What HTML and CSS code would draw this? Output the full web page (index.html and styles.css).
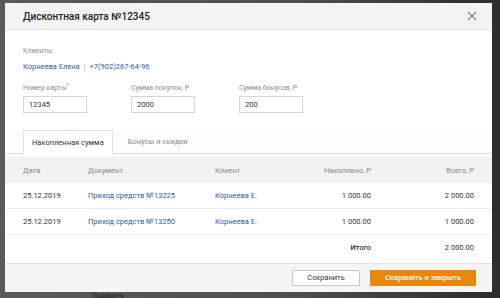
FILE: index.html
```html
<!DOCTYPE html>
<html lang="ru">
<head>
<meta charset="utf-8">
<link rel="stylesheet" href="styles.css">
</head>
<body>
<div class="backdrop">
  <div class="modal">
    <div class="head">
      <div class="title">Дисконтная карта №12345</div>
      <svg class="close" width="10" height="10" viewBox="0 0 10 10"><path d="M1 1L9 9M9 1L1 9" stroke="#8a8a8a" stroke-width="1.3"/></svg>
    </div>
    <div class="body">
      <div class="label">Клиенты</div>
      <div class="client"><span class="link">Корнеева Елена</span><span class="sep">|</span><span class="link">+7(902)267-64-96</span></div>
      <div class="fields">
        <div class="field"><div class="label">Номер карты<sup>*</sup></div><div class="input">12345</div></div>
        <div class="field"><div class="label">Сумма покупок, Р</div><div class="input">2000</div></div>
        <div class="field"><div class="label">Сумма бонусов, Р</div><div class="input">200</div></div>
      </div>
    </div>
    <div class="tabs">
      <div class="tab active">Накопленная сумма</div>
      <div class="tab">Бонусы и скидки</div>
    </div>
    <div class="table">
      <div class="row th">
        <div class="c1">Дата</div><div class="c2">Документ</div><div class="c3">Клиент</div><div class="c4">Накоплено, Р</div><div class="c5">Всего, Р</div>
      </div>
      <div class="row">
        <div class="c1">25.12.2019</div><div class="c2 link">Приход средств №13225</div><div class="c3 link">Корнеева Е.</div><div class="c4">1 000.00</div><div class="c5">2 000.00</div>
      </div>
      <div class="row">
        <div class="c1">25.12.2019</div><div class="c2 link">Приход средств №13250</div><div class="c3 link">Корнеева Е.</div><div class="c4">1 000.00</div><div class="c5">1 000.00</div>
      </div>
      <div class="row total">
        <div class="c1"></div><div class="c2"></div><div class="c3"></div><div class="c4 b">Итого</div><div class="c5">2 000.00</div>
      </div>
    </div>
    <div class="foot">
      <div class="btn">Сохранить</div>
      <div class="btn primary">Сохранить и закрыть</div>
    </div>
  </div>
  <div class="under">Подарить</div>
</div>
</body>
</html>
```
FILE: styles.css
```css
html, body { margin: 0; padding: 0; }
body {
  width: 500px; height: 298px; overflow: hidden;
  font-family: Roboto, "Liberation Sans", sans-serif;
  color: #333;
  background: linear-gradient(90deg, #5a5a5a 0%, #4d4d4d 60%, #2b2e2a 100%);
}
.backdrop { position: relative; height: 298px; padding: 3px 0 0 5px; box-sizing: border-box; }
.modal {
  width: 487px; height: 289px; background: #fff;
  display: flex; flex-direction: column;
  position: relative; z-index: 1;
}
.head {
  height: 26px; background: #f4f4f4; border-bottom: 1px solid #e6e6e6;
  display: flex; align-items: center; justify-content: space-between;
  padding: 0 15px 0 18px;
}
.title { font-size: 10px; font-weight: 500; color: #222; }
.body { padding: 17px 18px 0; }
.label { font-size: 7px; color: #8c8c8c; line-height: 9px; }
.label sup { color: #e07000; font-size: 6px; line-height: 0; }
.client { margin-top: 5px; font-size: 7.5px; line-height: 11px; }
.link { color: #2a5aa6; }
.sep { color: #999; margin: 0 4px; }
.fields { display: flex; gap: 44px; margin-top: 12px; }
.field { width: 64px; }
.input {
  margin-top: 3px; border: 1px solid #d4d4d4; box-sizing: border-box;
  height: 17px; font-size: 7.5px; line-height: 15px; padding-left: 5px; color: #333;
}
.tabs {
  margin-top: 17px; height: 23px; padding: 0 18px;
  border-bottom: 1px solid #e2e2e2; display: flex; align-items: flex-end;
  background: #fdfdfd;
}
.tab { font-size: 7.5px; color: #888; height: 23px; line-height: 23px; padding: 0 8px; }
.tab.active {
  color: #333; background: #fff; border: 1px solid #e2e2e2; border-bottom: none;
  height: 24px; margin-bottom: -1px; box-sizing: border-box; padding: 0 8px; margin-right: 7px;
}
.table { margin-top: 3px; }
.row {
  display: flex; align-items: center; height: 25px; padding: 0 18px;
  font-size: 7.5px; border-bottom: 1px solid #ececec; color: #333;
}
.row.th { background: #f2f2f2; color: #888; height: 26px; border-bottom: none; }
.row.total { border-bottom: none; height: 25px; }
.c1 { width: 65px; }
.c2 { width: 127px; }
.c3 { width: 80px; }
.c4 { width: 76px; text-align: right; }
.c5 { flex: 1; text-align: right; }
.b { font-weight: 500; }
.foot {
  margin-top: auto; height: 28px; background: #f5f5f5; border-top: 1px solid #e4e4e4;
  display: flex; align-items: center; justify-content: flex-end; gap: 10px; padding: 0 16px;
}
.btn {
  height: 16px; box-sizing: border-box; border: 1px solid #c8c8c8; background: #fff;
  font-size: 7.5px; line-height: 14px; color: #333; width: 68px; text-align: center;
}
.btn.primary { background: #e8870e; border-color: #e8870e; color: #fff; width: 106px; font-weight: 500; }
.under { position: absolute; left: 92px; top: 292px; font-size: 7px; color: #222; }
```
